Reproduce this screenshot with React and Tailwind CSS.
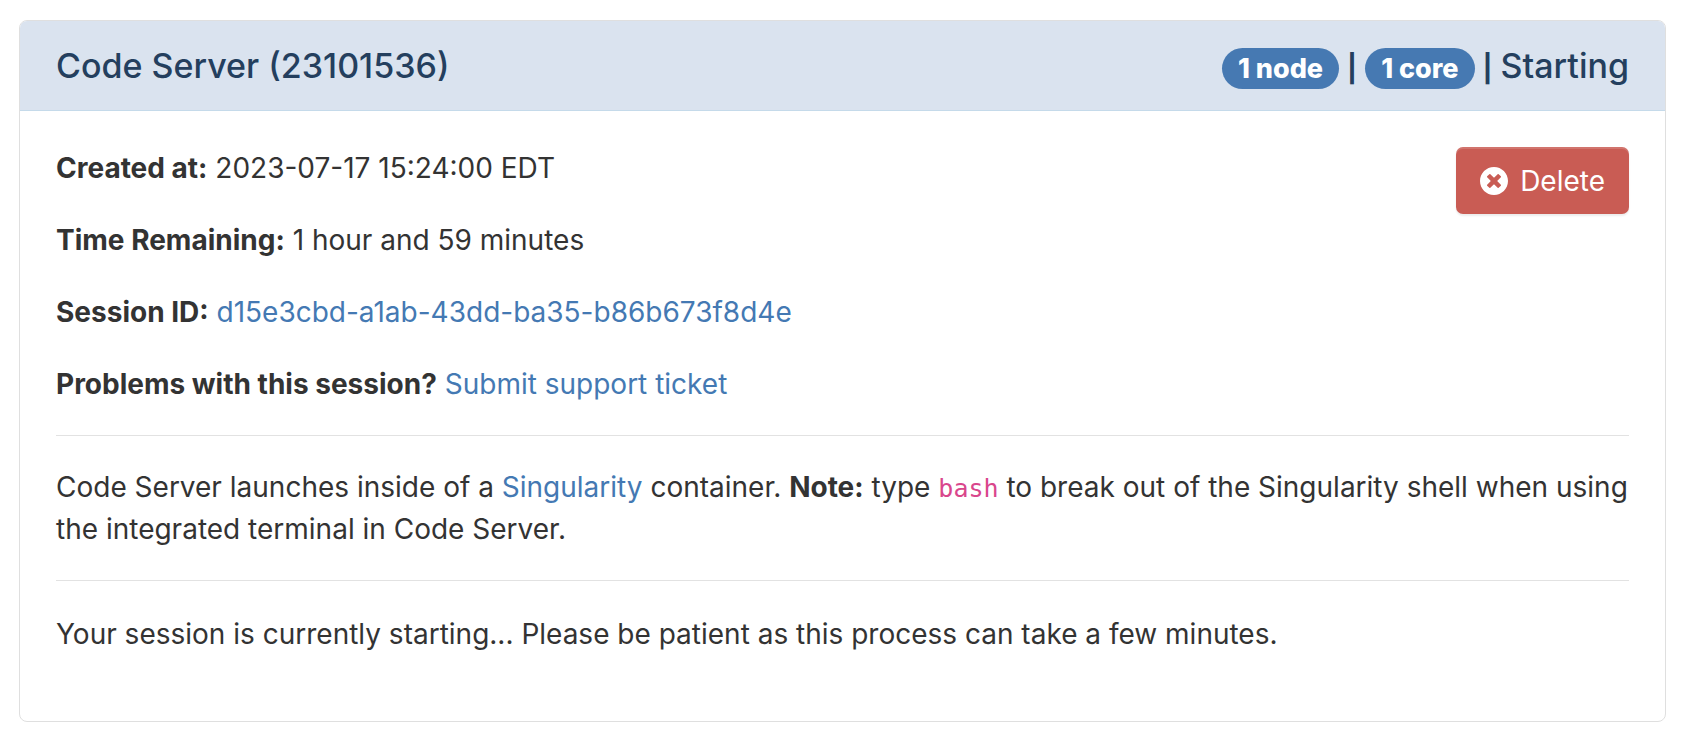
import React from "react";

const link = "text-[#4479b3] hover:underline";

function Pill({ children }) {
  return (
    <span className="rounded-full bg-[#4679b2] px-4 py-2 text-[27px] leading-[25px] font-extrabold text-white">
      {children}
    </span>
  );
}

function Divider() {
  return <span className="text-[27px] font-bold">|</span>;
}

function Field({ label, children }) {
  return (
    <p>
      <strong className="font-bold">{label}</strong> {children}
    </p>
  );
}

function DeleteIcon() {
  return (
    <svg viewBox="8 8 496 496" className="size-7" fill="currentColor" aria-hidden="true">
      <path d="M256 8C119 8 8 119 8 256s111 248 248 248 248-111 248-248S393 8 256 8zm121.600 313.100c4.700 4.700 4.700 12.300 0 17L338 377.600c-4.700 4.700-12.300 4.700-17 0L256 312l-65.100 65.600c-4.700 4.700-12.300 4.700-17 0L134.400 338c-4.700-4.700-4.700-12.300 0-17l65.600-65-65.600-65.100c-4.700-4.700-4.700-12.300 0-17l39.600-39.600c4.700-4.700 12.300-4.700 17 0l65 65.700 65.100-65.600c4.700-4.700 12.300-4.700 17 0l39.600 39.600c4.700 4.700 4.700 12.300 0 17L312 256l65.600 65.100z" />
    </svg>
  );
}

export default function App() {
  return (
    <main className="bg-white pt-5 pr-[18px] pb-5 pl-[19px] font-['Inter',sans-serif] text-[28px] leading-[42px] text-[#333]">
      <article className="overflow-hidden rounded-lg border border-[#dfdfdf] pb-[66px]">
        <header className="flex items-baseline justify-between border-b border-[#c5daea] bg-[#dae3ef] px-9 pt-[25px] pb-[21px] text-[34px] leading-[40px] font-medium text-[#243f5e]">
          <h1>Code Server (23101536)</h1>
          <div className="flex items-baseline gap-2">
            <Pill>1 node</Pill>
            <Divider />
            <Pill>1 core</Pill>
            <Divider />
            <span>Starting</span>
          </div>
        </header>
        <div className="px-9 pt-9">
          <div className="flex items-start justify-between">
            <div className="flex flex-col gap-[30px]">
              <Field label="Created at:">2023-07-17 15:24:00 EDT</Field>
              <Field label="Time Remaining:">1 hour and 59 minutes</Field>
              <Field label="Session ID:">
                <a href="#session" className={link}>d15e3cbd-a1ab-43dd-ba35-b86b673f8d4e</a>
              </Field>
              <Field label="Problems with this session?">
                <a href="#support" className={link}>Submit support ticket</a>
              </Field>
            </div>
            <button type="button" className="flex h-[67px] items-center gap-3 rounded-[7px] bg-[#c95c54] px-6 text-white shadow-[inset_0_2px_0_rgba(255,255,255,0.15),0_2px_2px_rgba(0,0,0,0.075)]">
              <DeleteIcon />
              Delete
            </button>
          </div>
          <hr className="my-[30px] border-t border-[#e2e2e2]" />
          <p>
            Code Server launches inside of a <a href="#singularity" className={link}>Singularity</a> container.{" "}
            <strong className="font-bold">Note:</strong> type{" "}
            <code className="font-['DejaVu_Sans_Mono',monospace] text-[25px] leading-none text-[#d9468c]">bash</code> to break out of the Singularity shell when using the integrated terminal in Code Server.
          </p>
          <hr className="mt-[30px] mb-8 border-t border-[#e2e2e2]" />
          <p>Your session is currently starting... Please be patient as this process can take a few minutes.</p>
        </div>
      </article>
    </main>
  );
}
